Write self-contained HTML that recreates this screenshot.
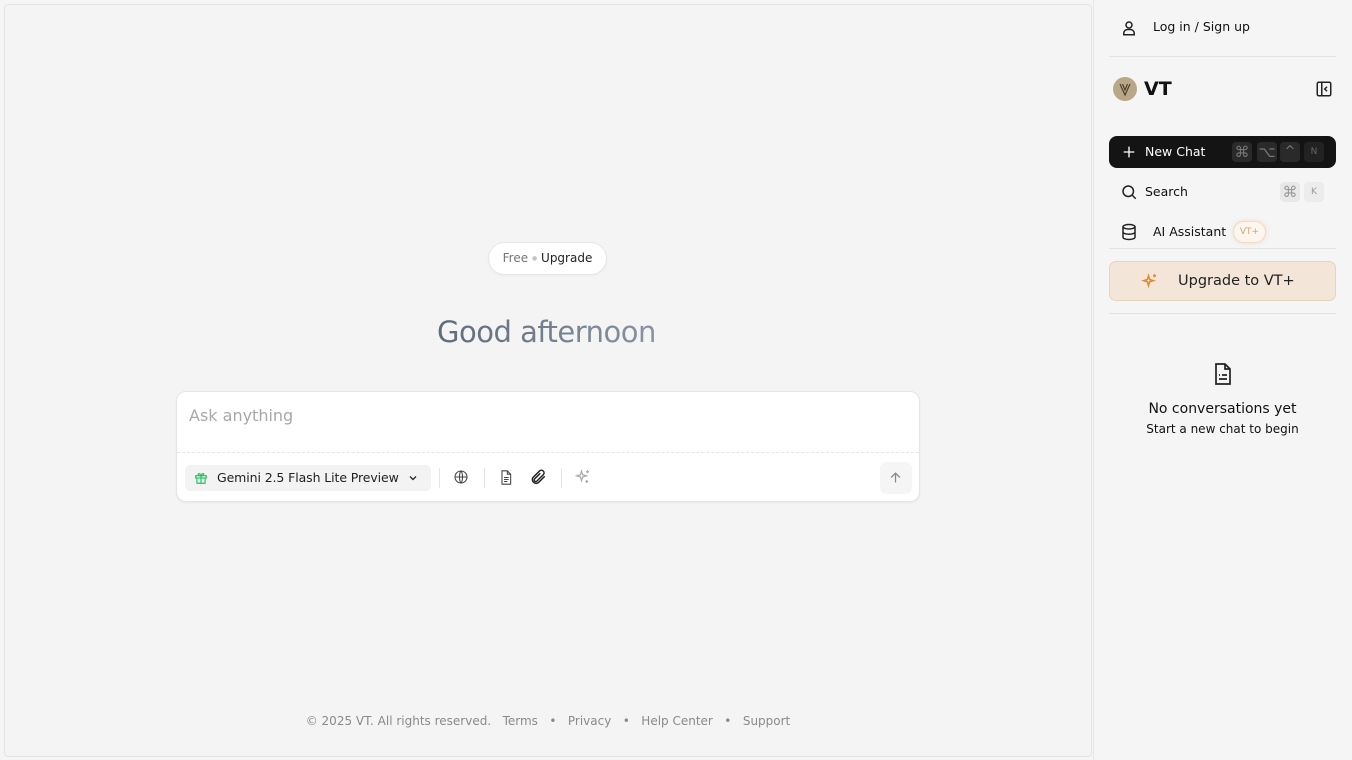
<!DOCTYPE html>
<html><head><meta charset="utf-8">
<style>
*{box-sizing:border-box;margin:0;padding:0}
body{width:1352px;height:760px;overflow:hidden;background:#f5f5f5;font-family:"DejaVu Sans","Liberation Sans",sans-serif;position:relative;color:#111}
.main{position:absolute;left:4px;top:4px;width:1088px;height:753px;border:1px solid #e3e3e3;border-radius:4px;background:#f4f4f4}
.side{position:absolute;left:1093px;top:0;width:259px;height:760px;background:#f5f5f5;border-left:1px solid #e8e8e8}
.abs{position:absolute}
.pill{left:488px;top:242px;width:119px;height:33px;border:1px solid #e6e6e6;border-radius:17px;background:#fff;font-size:12px;line-height:31px;text-align:center;box-shadow:0 1px 2px rgba(0,0,0,.04)}
.greet{left:437px;top:315px;font-size:29px;letter-spacing:-0.5px;background:linear-gradient(90deg,#5f6b7a,#8a93a2);-webkit-background-clip:text;background-clip:text;color:transparent}
.box{left:176px;top:391px;width:744px;height:111px;background:#fff;border:1px solid #e5e5e5;border-radius:10px;box-shadow:0 1px 2px rgba(0,0,0,.06)}
.foot{left:0;width:1096px;top:714px;text-align:center;font-size:12px;color:#8a8a8a}
.kbd{position:absolute;width:20px;height:20px;border-radius:4px;font-size:10px;text-align:center;line-height:20px}
</style></head><body>
<div class="main"></div>
<div class="abs pill"><span style="color:#777">Free</span> <span style="color:#c4c4c4;font-size:6px;vertical-align:2px">●</span> <span style="color:#222">Upgrade</span></div>
<div class="abs greet">Good afternoon</div>
<div class="abs box">
  <div class="abs" style="left:12px;top:14px;font-size:16px;color:#a8a8a8">Ask anything</div>
  <div class="abs" style="left:0;right:0;top:60px;border-top:1px dashed #e6e6e6"></div>
  <div class="abs" style="left:8px;top:73px;width:246px;height:26px;background:#f3f3f3;border-radius:5px;font-size:12.5px;line-height:26px;padding-left:32px;color:#222;letter-spacing:-0.1px">Gemini 2.5 Flash Lite Preview
    <svg class="abs" style="left:9px;top:6px" width="14" height="14" viewBox="0 0 24 24" fill="none" stroke="#22c55e" stroke-width="2"><rect x="3" y="8" width="18" height="4"/><path d="M5 12v9h14v-9M12 8v13M12 8C10 3 6 4 7.5 7 8 8 12 8 12 8c0 0 4 0 4.5-1C18 4 14 3 12 8"/></svg>
    <svg class="abs" style="left:222px;top:7px" width="12" height="12" viewBox="0 0 24 24" fill="none" stroke="#222" stroke-width="2.5"><path d="M6 9l6 6 6-6"/></svg>
  </div>
  <div class="abs" style="left:262px;top:76px;height:20px;border-left:1px solid #e5e5e5"></div>
  <svg class="abs" style="left:276px;top:77px" width="16" height="16" viewBox="0 0 24 24" fill="none" stroke="#444" stroke-width="1.6"><circle cx="12" cy="12" r="9"/><path d="M3 12h18M12 3c3 3 3 15 0 18M12 3c-3 3-3 15 0 18"/></svg>
  <div class="abs" style="left:307px;top:76px;height:20px;border-left:1px solid #e5e5e5"></div>
  <svg class="abs" style="left:321px;top:77px" width="16" height="17" viewBox="0 0 24 24" fill="none" stroke="#444" stroke-width="1.6"><path d="M6 2h8l5 5v15H6z M14 2v5h5 M9 12h7M9 15h7M9 18h5"/></svg>
  <svg class="abs" style="left:352px;top:76px" width="18" height="18" viewBox="0 0 24 24" fill="none" stroke="#222" stroke-width="2"><path d="M21 11l-8.5 8.5a5 5 0 01-7-7L14 4a3.5 3.5 0 015 5l-8.5 8.5a2 2 0 01-3-3L15 7"/></svg>
  <div class="abs" style="left:384px;top:76px;height:20px;border-left:1px solid #e5e5e5"></div>
  <svg class="abs" style="left:397px;top:76px" width="18" height="18" viewBox="0 0 24 24" fill="none" stroke="#aaa" stroke-width="1.6"><path d="M10 4l1.5 5 5 1.5-5 1.5L10 17l-1.5-5-5-1.5 5-1.5zM18 3v4M16 5h4M17 16v4M15 18h4"/></svg>
  <div class="abs" style="left:703px;top:70px;width:32px;height:32px;background:#f5f5f5;border-radius:7px"></div>
  <svg class="abs" style="left:711px;top:78px" width="15" height="15" viewBox="0 0 24 24" fill="none" stroke="#888" stroke-width="2"><path d="M12 20V5M5 12l7-7 7 7"/></svg>
</div>
<div class="abs foot">© 2025 VT. All rights reserved. &nbsp;&nbsp;Terms &nbsp;&nbsp;•&nbsp;&nbsp; Privacy &nbsp;&nbsp;•&nbsp;&nbsp; Help Center &nbsp;&nbsp;•&nbsp;&nbsp; Support</div>

<div class="side"></div>
<svg class="abs" style="left:1120px;top:19px" width="18" height="18" viewBox="0 0 24 24" fill="none" stroke="#222" stroke-width="2"><circle cx="12" cy="8" r="4"/><path d="M5 21v-2a5 5 0 015-5h4a5 5 0 015 5v2z"/></svg>
<div class="abs" style="left:1153px;top:19px;font-size:12.5px">Log in / Sign up</div>
<div class="abs" style="left:1109px;top:56px;width:227px;border-top:1px solid #e3e3e3"></div>
<div class="abs" style="left:1113px;top:77px;width:24px;height:24px;border-radius:50%;background:#b9a888"></div>
<svg class="abs" style="left:1117px;top:81px" width="16" height="16" viewBox="0 0 16 16" fill="none" stroke="#4a4030" stroke-width="1.2"><path d="M3 3l5 11 5-11M5.5 3l2.5 6 2.5-6"/></svg>
<div class="abs" style="left:1144px;top:78px;font-size:19px;font-weight:bold">VT</div>
<svg class="abs" style="left:1315px;top:80px" width="18" height="18" viewBox="0 0 24 24" fill="none" stroke="#222" stroke-width="2"><rect x="3" y="3" width="18" height="18" rx="2"/><path d="M9 3v18M16 9l-3 3 3 3"/></svg>
<div class="abs" style="left:1109px;top:136px;width:227px;height:32px;background:#141414;border-radius:8px;color:#fff;font-size:12.5px;line-height:32px;padding-left:36px">New Chat
  <svg class="abs" style="left:12px;top:8px" width="16" height="16" viewBox="0 0 24 24" fill="none" stroke="#fff" stroke-width="2"><path d="M12 4v16M4 12h16"/></svg>
  <div class="kbd" style="left:123px;top:6px;background:#2a2a2a;color:#777;font-size:15px">⌘</div>
  <div class="kbd" style="left:148px;top:6px;background:#2a2a2a;color:#777;font-size:15px">⌥</div>
  <div class="kbd" style="left:171px;top:6px;background:#2a2a2a;color:#777;font-size:13px">^</div>
  <div class="kbd" style="left:195px;top:6px;background:#222;color:#666;font-size:9px">N</div>
</div>
<svg class="abs" style="left:1120px;top:183px" width="18" height="18" viewBox="0 0 24 24" fill="none" stroke="#222" stroke-width="2"><circle cx="11" cy="11" r="7"/><path d="M16 16l5 5"/></svg>
<div class="abs" style="left:1145px;top:184px;font-size:12.5px">Search</div>
<div class="kbd" style="left:1280px;top:182px;background:#e8e8e8;color:#999;font-size:15px">⌘</div>
<div class="kbd" style="left:1304px;top:182px;background:#ececec;color:#999;font-size:9px">K</div>
<svg class="abs" style="left:1120px;top:223px" width="18" height="18" viewBox="0 0 24 24" fill="none" stroke="#222" stroke-width="2"><ellipse cx="12" cy="5" rx="8" ry="3"/><path d="M4 5v14c0 1.7 3.6 3 8 3s8-1.3 8-3V5M4 12c0 1.7 3.6 3 8 3s8-1.3 8-3"/></svg>
<div class="abs" style="left:1153px;top:224px;font-size:12.5px">AI Assistant</div>
<div class="abs" style="left:1233px;top:221px;width:33px;height:22px;border-radius:11px;background:#fdf6ee;border:1px solid #efdcc4;box-shadow:0 0 4px rgba(230,180,120,.4);font-size:9px;color:#c9a57c;text-align:center;line-height:20px">VT+</div>
<div class="abs" style="left:1109px;top:248px;width:227px;border-top:1px solid #e3e3e3"></div>
<div class="abs" style="left:1109px;top:261px;width:227px;height:40px;background:#f3e6d8;border:1px solid #e6d3bd;border-radius:7px;font-size:14.5px;line-height:39px;padding-left:68px;color:#222">Upgrade to VT+
  <svg class="abs" style="left:31px;top:10px" width="18" height="18" viewBox="0 0 24 24" fill="none" stroke="#e08a2c" stroke-width="2"><path d="M10 5l1.5 5 5 1.5-5 1.5L10 18l-1.5-5-5-1.5 5-1.5zM18 3v4M16 5h4"/></svg>
</div>
<div class="abs" style="left:1109px;top:313px;width:227px;border-top:1px solid #e3e3e3"></div>
<svg class="abs" style="left:1211px;top:361px" width="24" height="26" viewBox="0 0 24 24" fill="none" stroke="#222" stroke-width="1.7"><path d="M5 2h9l5 5v15H5z M14 2v5h5 M8 13h1M11 13h5M8 17h8"/></svg>
<div class="abs" style="left:1093px;width:259px;top:401px;text-align:center;font-size:14px">No conversations yet</div>
<div class="abs" style="left:1093px;width:259px;top:422px;text-align:center;font-size:12px">Start a new chat to begin</div>
</body></html>
